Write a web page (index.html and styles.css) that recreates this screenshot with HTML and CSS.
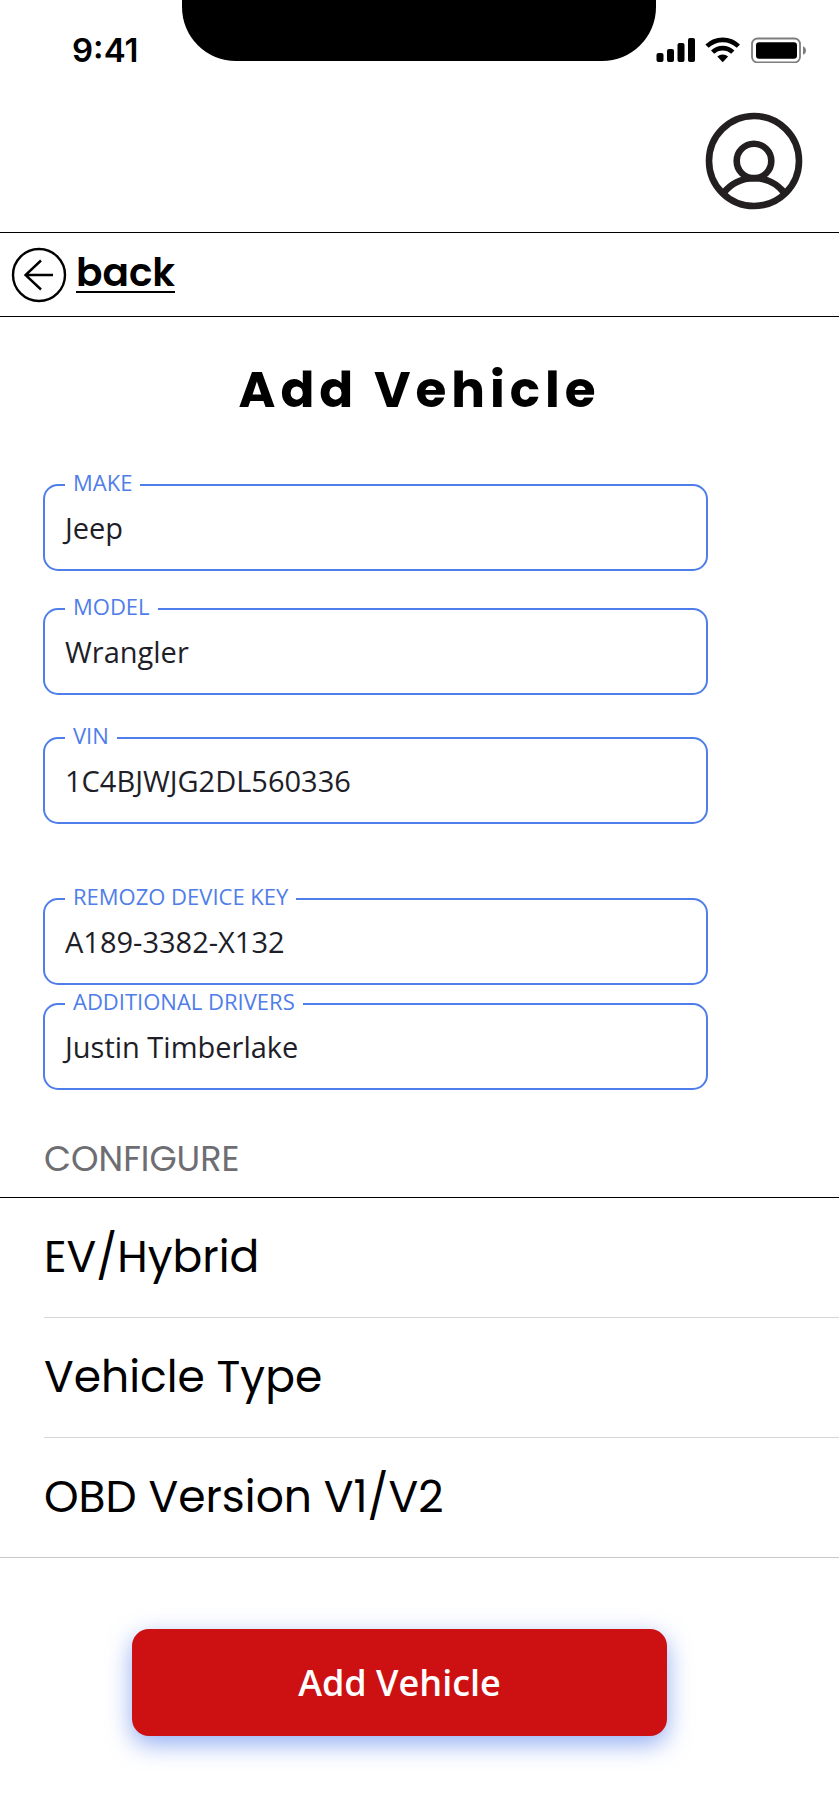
FILE: index.html
```html
<!DOCTYPE html>
<html lang="en">
<head>
<meta charset="utf-8">
<meta name="viewport" content="width=device-width, initial-scale=1">
<title>Add Vehicle</title>
<link rel="stylesheet" href="styles.css">
</head>
<body>
<div class="status">
  <span class="status-time">9:41</span>
  <span class="status-notch"></span>
  <div class="status-icons">
    <svg width="40" height="26" viewBox="0 0 40 26" role="img" aria-label="Signal">
      <rect x="0.5" y="16" width="7" height="9" rx="2"/>
      <rect x="11" y="12" width="7" height="13" rx="2"/>
      <rect x="21.500" y="6" width="7" height="19" rx="2"/>
      <rect x="32" y="1" width="7" height="24" rx="2"/>
    </svg>
    <svg width="36" height="26" viewBox="0 0 36 26" role="img" aria-label="Wi-Fi">
      <g fill="none" stroke="#000" stroke-width="4.600">
        <path d="M2 9.200a22.600 22.600 0 0 1 31.400 0"/>
        <path d="M7.600 15.200a14.600 14.600 0 0 1 20.200 0"/>
      </g>
      <path d="M12.300 19.600a8 8 0 0 1 10.800 0L17.700 25.200z"/>
    </svg>
    <svg width="56" height="26" viewBox="0 0 56 26" role="img" aria-label="Battery">
      <rect x="2" y="1.500" width="48" height="24" rx="5.500" fill="none" stroke="#7d7d7d" stroke-width="1.800"/>
      <rect x="6" y="5.300" width="41" height="16.400" rx="3"/>
      <path d="M53 9.200a4.600 4.600 0 0 1 0 8.600z" fill="#7d7d7d"/>
    </svg>
  </div>
</div>
<header class="topbar">
  <button class="avatar" type="button" aria-label="Profile">
    <svg width="98" height="98" viewBox="-1 -1 98 98" fill="none" stroke="#231f20" stroke-width="6.600">
      <circle cx="48" cy="48" r="45"/>
      <circle cx="48" cy="48" r="17.300"/>
      <path d="M17.600 80a38.500 38.500 0 0 1 60.800 0"/>
    </svg>
  </button>
</header>
<nav class="backbar">
  <a class="back" href="#">
    <svg width="56" height="56" viewBox="0 0 56 56" fill="none" stroke="#000" stroke-width="2.400">
      <circle cx="28" cy="28" r="26"/>
      <path d="M42 28H14.500M30 13.500L14.500 28L30 42.500"/>
    </svg>
    <span class="back-text">back</span>
  </a>
</nav>
<main>
  <h1 class="title">Add Vehicle</h1>
  <form>
    <div class="fields">
      <fieldset class="field">
        <legend><label for="make">MAKE</label></legend>
        <input id="make" type="text" value="Jeep">
      </fieldset>
      <fieldset class="field">
        <legend><label for="model">MODEL</label></legend>
        <input id="model" type="text" value="Wrangler">
      </fieldset>
      <fieldset class="field field-last">
        <legend><label for="vin">VIN</label></legend>
        <input id="vin" type="text" value="1C4BJWJG2DL560336">
      </fieldset>
      <fieldset class="field field-tight">
        <legend><label for="key">REMOZO DEVICE KEY</label></legend>
        <input id="key" type="text" value="A189-3382-X132">
      </fieldset>
      <fieldset class="field field-tight">
        <legend><label for="drivers">ADDITIONAL DRIVERS</label></legend>
        <input id="drivers" type="text" value="Justin Timberlake">
      </fieldset>
    </div>
    <h2 class="section">CONFIGURE</h2>
    <ul class="options">
      <li><a href="#">EV/Hybrid</a></li>
      <li><a href="#">Vehicle Type</a></li>
      <li><a href="#">OBD Version V1/V2</a></li>
    </ul>
    <div class="actions">
      <button class="submit" type="submit">Add Vehicle</button>
    </div>
  </form>
</main>
</body>
</html>
```
FILE: styles.css
```css
* {
  box-sizing: border-box;
}

body {
  margin: 0;
  background: #fff;
  color: #000;
  font-family: Poppins, Inter, sans-serif;
}

svg {
  display: block;
}

.status {
  display: grid;
  grid-template-columns: 1fr 474px 1fr;
  align-items: start;
}

.status-time {
  padding: 30px 0 0 72px;
  font: 600 33px/40px Inter, sans-serif;
}

.status-notch {
  height: 61px;
  border-radius: 0 0 54px 54px;
  background: #000;
}

.status-icons {
  display: flex;
  justify-content: flex-end;
  gap: 9px;
  padding: 37px 33px 0 0;
}

.topbar {
  display: flex;
  justify-content: flex-end;
  padding: 42px 36px 22px 0;
  border-bottom: 1px solid #000;
}

.avatar {
  padding: 0;
  border: 0;
  background: none;
}

.backbar {
  display: flex;
  padding: 14px 11px 13px;
  border-bottom: 1px solid #000;
}

.back {
  display: flex;
  gap: 9px;
  color: #000;
  text-decoration: none;
}

.back-text {
  align-self: flex-start;
  padding-top: 8px;
  border-bottom: 2px solid #000;
  font-size: 39px;
  font-weight: 600;
  line-height: 36px;
}

.title {
  margin: 0;
  padding: 42px 0 50px;
  font-size: 50px;
  font-weight: 700;
  line-height: 62px;
  letter-spacing: 5px;
  text-align: center;
}

.fields {
  padding: 0 131px 0 43px;
}

.field {
  min-width: 0;
  height: 100px;
  margin: 0 0 24px;
  padding: 0 12px;
  border: 2px solid #4f7de9;
  border-radius: 15px;
}

.field-last {
  margin: 29px 0 61px;
}

.field-tight {
  margin-bottom: 5px;
}

.field legend {
  margin-left: 8px;
  padding: 0 8px 6px;
  color: #4f7de9;
  font: 400 22px/22px "Open Sans", sans-serif;
}

.field input {
  display: block;
  width: 100%;
  height: 56px;
  padding: 0;
  border: 0;
  outline: 0;
  background: none;
  color: #1e1e28;
  font: 400 29px/40px "Open Sans", sans-serif;
  text-indent: 8px;
}

.section {
  margin: 0;
  padding: 41px 44px 15px;
  border-bottom: 1px solid #000;
  color: #6d6d72;
  font-size: 35px;
  font-weight: 400;
  line-height: 46px;
}

.options {
  margin: 0;
  padding: 0 0 0 44px;
  border-bottom: 1px solid #c8c8cc;
  list-style: none;
}

.options li + li {
  border-top: 1px solid #d6d6d8;
}

.options a {
  display: block;
  padding: 29px 0 31px;
  color: #000;
  font-size: 44px;
  line-height: 59px;
  text-decoration: none;
}

.actions {
  padding: 71px 172px 81px 132px;
}

.submit {
  display: block;
  width: 100%;
  height: 107px;
  border: 0;
  border-radius: 17px;
  background: #cd1113;
  box-shadow: 0 8px 24px rgba(74, 118, 233, 0.6);
  color: #fff;
  font: 600 36px/48px "Open Sans", sans-serif;
}
```
